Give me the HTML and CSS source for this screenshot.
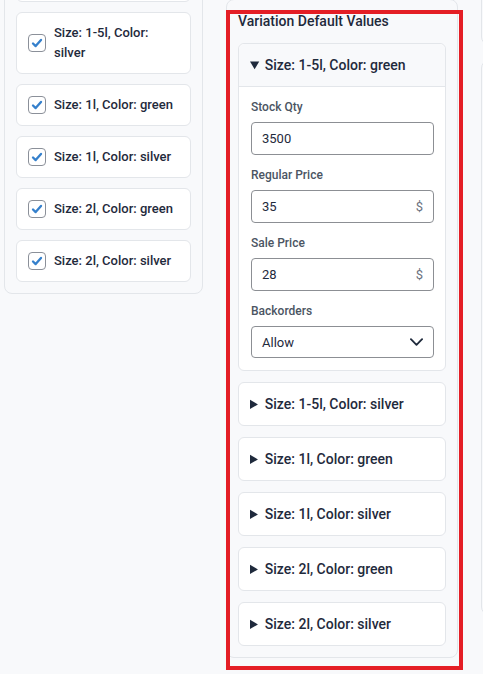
FILE: index.html
```
<!DOCTYPE html>
<html lang="en">
<head>
  <meta charset="UTF-8">
  <meta name="viewport" content="width=device-width, initial-scale=1.0">
  <title>Product Variations</title>
  <link rel="stylesheet" href="styles.css">
</head>
<body>
  <div class="workspace">
    <!-- selected variations -->
    <section class="panel variant-list">
      <label class="variant"><span class="check"><svg viewBox="0 0 18 18"><path d="M4.5 9.5l3 3 6-7" /></svg></span><span>Size: 1-5l, Color: green</span></label>
      <label class="variant"><span class="check"><svg viewBox="0 0 18 18"><path d="M4.5 9.5l3 3 6-7" /></svg></span><span>Size: 1-5l, Color: silver</span></label>
      <label class="variant"><span class="check"><svg viewBox="0 0 18 18"><path d="M4.5 9.5l3 3 6-7" /></svg></span><span>Size: 1l, Color: green</span></label>
      <label class="variant"><span class="check"><svg viewBox="0 0 18 18"><path d="M4.5 9.5l3 3 6-7" /></svg></span><span>Size: 1l, Color: silver</span></label>
      <label class="variant"><span class="check"><svg viewBox="0 0 18 18"><path d="M4.5 9.5l3 3 6-7" /></svg></span><span>Size: 2l, Color: green</span></label>
      <label class="variant"><span class="check"><svg viewBox="0 0 18 18"><path d="M4.5 9.5l3 3 6-7" /></svg></span><span>Size: 2l, Color: silver</span></label>
    </section>

    <!-- default values per variation -->
    <section class="panel defaults">
      <h3>Variation Default Values</h3>

      <details class="variation" open>
        <summary>Size: 1-5l, Color: green</summary>
        <div class="variation-body">
          <div class="field">
            <span class="field-label">Stock Qty</span>
            <div class="input"><span>3500</span></div>
          </div>
          <div class="field">
            <span class="field-label">Regular Price</span>
            <div class="input"><span>35</span><span class="unit">$</span></div>
          </div>
          <div class="field">
            <span class="field-label">Sale Price</span>
            <div class="input"><span>28</span><span class="unit">$</span></div>
          </div>
          <div class="field">
            <span class="field-label">Backorders</span>
            <div class="input select"><span>Allow</span>
              <svg class="chevron" viewBox="0 0 14 8"><path d="M1 1l6 6 6-6" /></svg>
            </div>
          </div>
        </div>
      </details>

      <details class="variation"><summary>Size: 1-5l, Color: silver</summary></details>
      <details class="variation"><summary>Size: 1l, Color: green</summary></details>
      <details class="variation"><summary>Size: 1l, Color: silver</summary></details>
      <details class="variation"><summary>Size: 2l, Color: green</summary></details>
      <details class="variation"><summary>Size: 2l, Color: silver</summary></details>

      <div class="highlight"></div>
    </section>

    <div class="side-col">
      <section class="panel side-top"></section>
      <section class="panel side-main"></section>
    </div>
  </div>
</body>
</html>
```

FILE: styles.css
```
* { margin: 0; padding: 0; box-sizing: border-box; }
body { background: #f8f9fb; color: #1f2a3c; font-family: Roboto, "Noto Sans", sans-serif; width: 483px; height: 674px; overflow: hidden; }

/* columns (page is scrolled a little) */
.workspace { display: flex; align-items: flex-start; gap: 23px; padding-left: 4px; margin-top: -72px; }
.panel { background: #f8f9fb; border: 1px solid #e3e6ea; border-radius: 8px; }

/* left: variation checklist */
.variant-list { width: 199px; flex-shrink: 0; padding: 11px; display: flex; flex-direction: column; gap: 10px; }
.variant { display: flex; align-items: center; gap: 8px; background: #fff; border: 1px solid #e3e6ea; border-radius: 6px; padding: 10px 11px; font-size: 13px; font-weight: 500; line-height: 20px; color: #1f2a3c; }
.check { flex-shrink: 0; width: 18px; height: 18px; border: 1.5px solid #8b9099; border-radius: 4px; background: #fff; display: flex; }
.check svg { width: 100%; height: 100%; }
.check path { fill: none; stroke: #3580cc; stroke-width: 2.6; stroke-linecap: round; stroke-linejoin: round; }

/* middle: default values */
.defaults { position: relative; width: 232px; flex-shrink: 0; margin-top: 71px; padding: 11px; display: flex; flex-direction: column; gap: 11px; }
.defaults h3 { font-size: 14px; font-weight: 500; line-height: 20px; color: #1f2a3c; margin-bottom: 1px; }
.variation { background: #fff; border: 1px solid #e3e6ea; border-radius: 6px; }
.variation summary { padding: 11px 11px; font-size: 14px; font-weight: 500; line-height: 20px; color: #1f2a3c; cursor: pointer; }
.variation[open] summary { background: #f8f9fb; border-bottom: 1px solid #e3e6ea; border-radius: 6px 6px 0 0; }
.variation-body { padding: 12px 11px 12px 12px; display: flex; flex-direction: column; gap: 12px; }
.field { display: flex; flex-direction: column; gap: 7px; }
.field-label { font-size: 12px; font-weight: 500; line-height: 16px; color: #4b5563; }
.input { height: 33px; border: 1px solid #8c8f94; border-radius: 4px; padding: 0 10px; display: flex; align-items: center; justify-content: space-between; font-size: 13px; color: #1f2a3c; }
.input .unit { color: #6b7280; font-size: 13px; }
.select { height: 32px; }
.chevron { width: 13px; height: 8px; }
.chevron path { fill: none; stroke: #1f2a3c; stroke-width: 2; stroke-linecap: round; stroke-linejoin: round; }

/* annotation frame */
.highlight { position: absolute; left: -1px; top: 10px; width: 237px; height: 660px; border: 4px solid #e41e25; pointer-events: none; }

/* right: next column */
.side-col { display: flex; flex-direction: column; gap: 15px; flex-shrink: 0; width: 200px; }
.side-top { height: 117px; }
.side-main { height: 555px; }
```
